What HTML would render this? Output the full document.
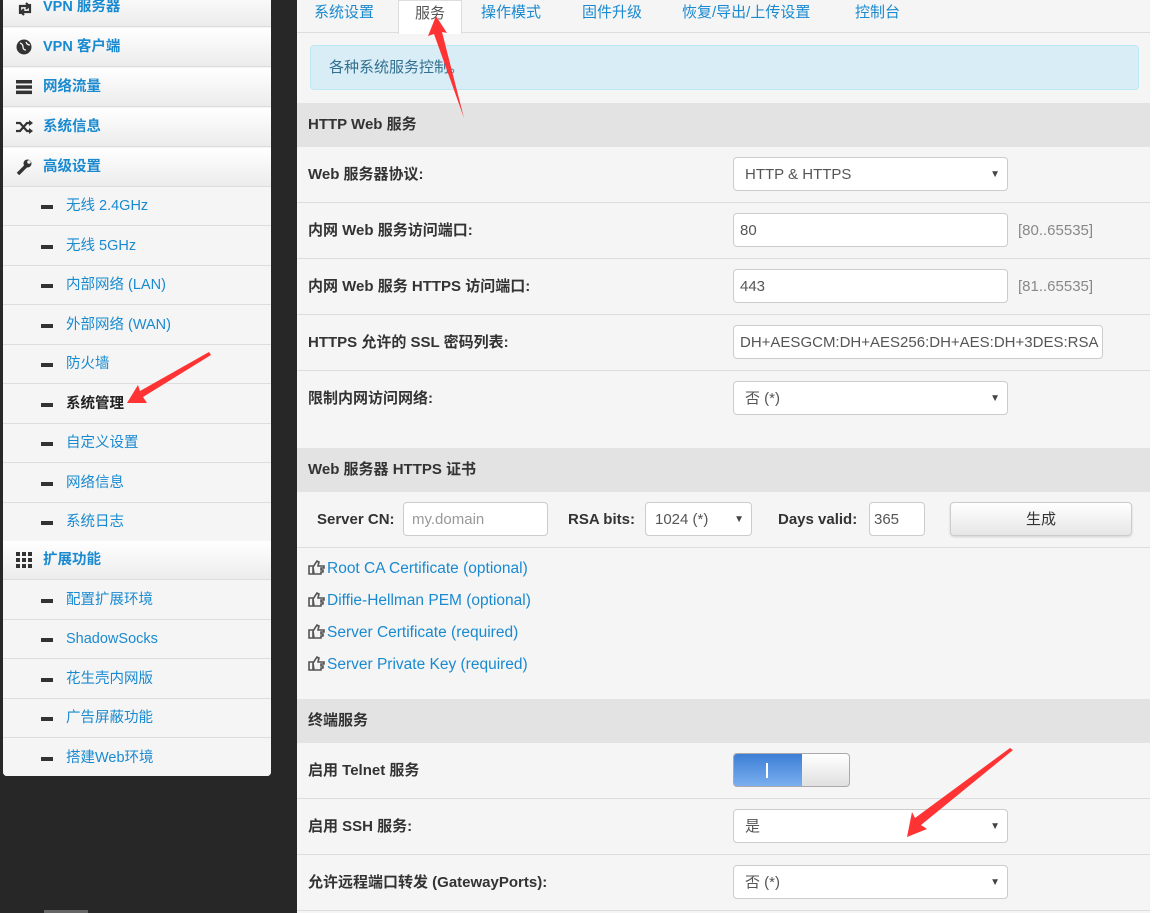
<!DOCTYPE html>
<html><head><meta charset="utf-8"><style>
*{box-sizing:border-box;margin:0;padding:0}
body{width:1152px;height:913px;background:#272727;position:relative;overflow:hidden;font-family:"Liberation Sans","Noto Sans CJK SC",sans-serif;font-size:15px}
.a{position:absolute}
#side{left:3px;top:-12px;width:268px;height:788px;background:#f5f5f5;border-radius:0 0 4px 4px;overflow:hidden}
.it{position:absolute;left:0;width:268px;height:39px;border-bottom:1px solid #ddd;color:#1a8ad0;font-size:14.5px;line-height:39px}
.top{background:linear-gradient(#fff,#ececec);font-weight:bold;padding-left:40px}
.sub{background:#f5f5f5;padding-left:63px}
.sub:before{content:"";position:absolute;left:38px;top:18px;width:12px;height:4px;background:#333}
.ic{position:absolute;left:13px;top:11px}
#main{left:297px;top:0;width:853px;height:913px;background:#f5f5f5}
.tabs{position:absolute;left:0;top:0;width:853px;height:33px;border-bottom:1px solid #ddd}
.tab{position:absolute;top:0;height:33px;line-height:25px;color:#1a8ad0;font-size:15px}
.hd{position:absolute;left:0;width:853px;height:44px;background:#e3e3e3;font-weight:bold;color:#333;padding-left:11px;line-height:44px;font-size:15px}
.row{position:absolute;left:0;width:853px;height:56px;border-bottom:1px solid #ddd}
.lb{position:absolute;left:11px;top:0;line-height:55px;font-weight:bold;color:#333;font-size:15px}
.inp{position:absolute;left:436px;top:10px;width:275px;height:34px;background:#fff;border:1px solid #ccc;border-radius:4px;padding-left:11px;line-height:34px;color:#555;font-size:15px}
.sel:after{content:"▼";position:absolute;right:7px;top:0;font-size:10px;color:#444}
.rng{position:absolute;left:721px;top:0;line-height:55px;color:#888}
.lk{position:absolute;left:11px;color:#1a8ad0;font-size:15.5px}
.lk svg{margin-right:2px}
</style></head><body>
<div id="side" class="a">
<div class="it top" style="top:0">VPN 服务器<svg class="ic" width="18" height="16" viewBox="0 0 18 16" style="top:13px"><path d="M4 13V5h9M10 2l3 3-3 3M14 3v8H5M8 14l-3-3 3-3" fill="none" stroke="#333" stroke-width="2.2"/></svg></div>
<div class="it top" style="top:40px">VPN 客户端<svg class="ic" width="16" height="16"><circle cx="8" cy="8" r="7.5" fill="#333"/><path d="M4 4q3 1 3 4t3 3M10 3q1 3 4 3" stroke="#f5f5f5" fill="none" stroke-width="1.3"/></svg></div>
<div class="it top" style="top:80px">网络流量<svg class="ic" width="16" height="16"><rect y="1" width="16" height="3.5" fill="#333"/><rect y="6.3" width="16" height="3.5" fill="#333"/><rect y="11.6" width="16" height="3.5" fill="#333"/></svg></div>
<div class="it top" style="top:120px">系统信息<svg class="ic" width="17" height="16"><path d="M0 4h4l7 8h4M0 12h4l7-8h4" fill="none" stroke="#333" stroke-width="2.2"/><path d="M13 1l4 3-4 3zM13 9l4 3-4 3z" fill="#333"/></svg></div>
<div class="it top" style="top:160px">高级设置<svg class="ic" width="16" height="16"><path d="M2 15l8-8" stroke="#333" stroke-width="3.5"/><circle cx="11.5" cy="4.5" r="4" fill="#333"/><circle cx="13" cy="3" r="1.8" fill="#f0f0f0"/></svg></div>
<div class="it sub" style="top:199px">无线 2.4GHz</div>
<div class="it sub" style="top:239px">无线 5GHz</div>
<div class="it sub" style="top:278px">内部网络 (LAN)</div>
<div class="it sub" style="top:318px">外部网络 (WAN)</div>
<div class="it sub" style="top:357px">防火墙</div>
<div class="it sub" style="top:397px;color:#222;font-weight:bold">系统管理</div>
<div class="it sub" style="top:436px">自定义设置</div>
<div class="it sub" style="top:476px">网络信息</div>
<div class="it sub" style="top:515px">系统日志</div>
<div class="it top" style="top:553px">扩展功能<svg class="ic" width="16" height="16"><g fill="#333"><rect width="4" height="4"/><rect x="6" width="4" height="4"/><rect x="12" width="4" height="4"/><rect y="6" width="4" height="4"/><rect x="6" y="6" width="4" height="4"/><rect x="12" y="6" width="4" height="4"/><rect y="12" width="4" height="4"/><rect x="6" y="12" width="4" height="4"/><rect x="12" y="12" width="4" height="4"/></g></svg></div>
<div class="it sub" style="top:593px">配置扩展环境</div>
<div class="it sub" style="top:632px">ShadowSocks</div>
<div class="it sub" style="top:672px">花生壳内网版</div>
<div class="it sub" style="top:711px">广告屏蔽功能</div>
<div class="it sub" style="top:751px;border:none">搭建Web环境</div>
</div>
<div class="a" style="left:44px;top:910px;width:44px;height:3px;background:#666"></div>
<div id="main" class="a">
<div class="tabs">
<div class="tab" style="left:17px">系统设置</div>
<div class="tab" style="left:101px;width:64px;background:#fff;border:1px solid #ddd;border-bottom:none;height:34px;text-align:center;color:#555">服务</div>
<div class="tab" style="left:184px">操作模式</div>
<div class="tab" style="left:285px">固件升级</div>
<div class="tab" style="left:385px">恢复/导出/上传设置</div>
<div class="tab" style="left:558px">控制台</div>
</div>
<div class="a" style="left:13px;top:45px;width:829px;height:45px;background:#d9edf7;border:1px solid #bce8f1;border-radius:4px;color:#31708f;line-height:43px;padding-left:18px">各种系统服务控制。</div>
<div class="hd" style="top:103px">HTTP Web 服务</div>
<div class="row" style="top:147px"><div class="lb">Web 服务器协议:</div><div class="inp sel">HTTP &amp; HTTPS</div></div>
<div class="row" style="top:203px"><div class="lb">内网 Web 服务访问端口:</div><div class="inp" style="padding-left:6px">80</div><div class="rng">[80..65535]</div></div>
<div class="row" style="top:259px"><div class="lb">内网 Web 服务 HTTPS 访问端口:</div><div class="inp" style="padding-left:6px">443</div><div class="rng">[81..65535]</div></div>
<div class="row" style="top:315px"><div class="lb">HTTPS 允许的 SSL 密码列表:</div><div class="inp" style="width:370px;padding-left:6px;overflow:hidden;white-space:nowrap">DH+AESGCM:DH+AES256:DH+AES:DH+3DES:RSA</div></div>
<div class="row" style="top:371px;border:none"><div class="lb">限制内网访问网络:</div><div class="inp sel">否 (*)</div></div>
<div class="hd" style="top:448px">Web 服务器 HTTPS 证书</div>
<div class="row" style="top:492px">
<div class="lb" style="left:20px">Server CN:</div><div class="inp" style="left:106px;width:145px;color:#999;padding-left:8px">my.domain</div>
<div class="lb" style="left:271px">RSA bits:</div><div class="inp sel" style="left:348px;width:107px;padding-left:9px">1024 (*)</div>
<div class="lb" style="left:481px">Days valid:</div><div class="inp" style="left:572px;width:56px;padding-left:4px">365</div>
<div class="inp" style="left:653px;width:182px;background:linear-gradient(#fff,#e6e6e6);text-align:center;padding:0;color:#333;box-shadow:0 1px 2px rgba(0,0,0,.15)">生成</div>
</div>
<svg width="0" height="0" style="position:absolute"><defs><g id="h"><path d="M1 6h4v8H1zM5 7l4-6 2 1-1 4h6v2h-3v2h2v2h-2v2H6z" fill="none" stroke="#555" stroke-width="1.6"/></g></defs></svg>
<div class="lk" style="top:560px"><svg width="17" height="15" style="vertical-align:-2px"><use href="#h"/></svg>Root CA Certificate (optional)</div>
<div class="lk" style="top:592px"><svg width="17" height="15" style="vertical-align:-2px"><use href="#h"/></svg>Diffie-Hellman PEM (optional)</div>
<div class="lk" style="top:624px"><svg width="17" height="15" style="vertical-align:-2px"><use href="#h"/></svg>Server Certificate (required)</div>
<div class="lk" style="top:656px"><svg width="17" height="15" style="vertical-align:-2px"><use href="#h"/></svg>Server Private Key (required)</div>
<div class="hd" style="top:699px">终端服务</div>
<div class="row" style="top:743px"><div class="lb">启用 Telnet 服务</div>
<div class="a" style="left:436px;top:10px;width:117px;height:34px;border:1px solid #aaa;border-radius:4px;overflow:hidden;background:linear-gradient(#fff,#e0e0e0)"><div style="width:68px;height:34px;background:linear-gradient(#3c7ed6,#7fb2f0);position:relative"><div style="position:absolute;left:32px;top:9px;width:2px;height:15px;background:#fff"></div></div></div></div>
<div class="row" style="top:799px"><div class="lb">启用 SSH 服务:</div><div class="inp sel">是</div></div>
<div class="row" style="top:855px"><div class="lb">允许远程端口转发 (GatewayPorts):</div><div class="inp sel">否 (*)</div></div>
</div>
<div class="a" style="left:1150px;top:0;width:2px;height:913px;background:#fff"></div>
<svg class="a" style="left:0;top:0" width="1152" height="913">
<g fill="#f33">
<path d="M436 16L428 36L434 34L464 118L442 32L447 33Z"/>
<path d="M127 403L147 403L143 397L211 355L209 352L140 391L138 385Z"/>
<path d="M907 837L927 829L921 825L1013 750L1010 748L915 818L912 812Z"/>
</g></svg>
</body></html>
